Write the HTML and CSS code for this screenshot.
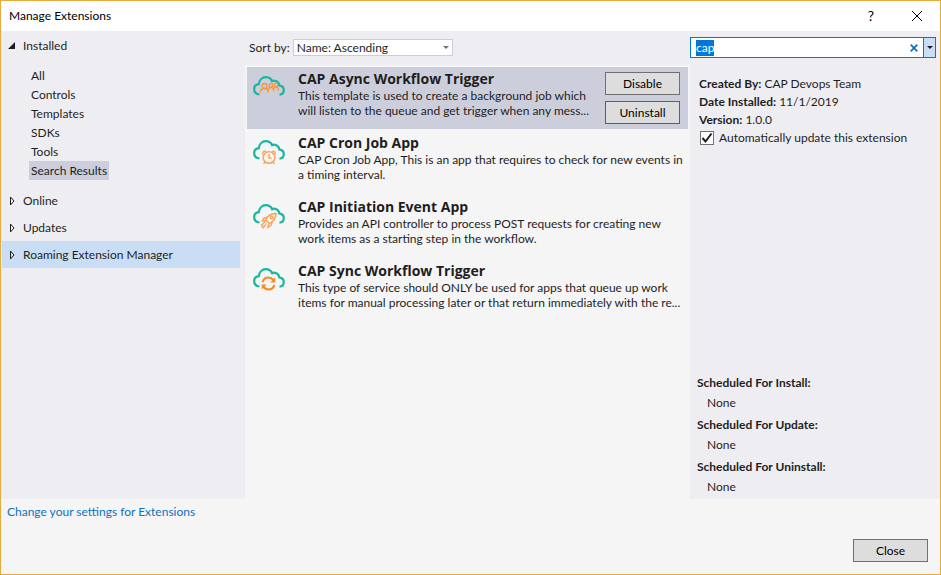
FILE: index.html
```html
<!DOCTYPE html>
<html lang="en">
<head>
<meta charset="utf-8">
<title>Manage Extensions</title>
<link rel="stylesheet" href="styles.css">
</head>
<body>
<svg class="defs" aria-hidden="true">
  <symbol id="cloud" viewBox="0 0 32 24">
    <path d="M6.500 18.500C3 18 1.200 15.800 1.200 13.200C1.200 10.500 3.200 8.500 5.800 8.200C6.200 4.200 9 1.200 12.800 1.200C15.800 1.200 18 2.800 19.200 5.200C20.200 4.700 21.200 4.600 22.200 4.800C24.500 5.300 26 7 26.200 9.400C29 9.800 30.800 11.600 30.800 14C30.800 16.600 29 18.500 26.500 18.600" fill="none" stroke="#1cb5a0" stroke-width="2.200"/>
  </symbol>
</svg>
<div class="window">
  <header class="titlebar">
    <h1>Manage Extensions</h1>
    <button class="caption help" type="button">?</button>
    <button class="caption" type="button" aria-label="Close window"><svg width="12" height="12" viewBox="0 0 12 12"><path d="M1 1L11 11M11 1L1 11" stroke="#000" fill="none"/></svg></button>
  </header>
  <main class="content">
    <nav class="sidebar">
      <button class="group" type="button"><svg width="8" height="8" viewBox="0 0 8 8"><path d="M7 0V7H0Z" fill="#1e1e1e"/></svg>Installed</button>
      <ul class="tree">
        <li><a href="#">All</a></li>
        <li><a href="#">Controls</a></li>
        <li><a href="#">Templates</a></li>
        <li><a href="#">SDKs</a></li>
        <li><a href="#">Tools</a></li>
        <li><a class="current" href="#">Search Results</a></li>
      </ul>
      <button class="group" type="button"><svg width="8" height="10" viewBox="0 0 8 10"><path d="M2.500 1L6 5L2.500 9Z" fill="none" stroke="#1e1e1e"/></svg>Online</button>
      <button class="group" type="button"><svg width="8" height="10" viewBox="0 0 8 10"><path d="M2.500 1L6 5L2.500 9Z" fill="none" stroke="#1e1e1e"/></svg>Updates</button>
      <button class="group active" type="button"><svg width="8" height="10" viewBox="0 0 8 10"><path d="M2.500 1L6 5L2.500 9Z" fill="none" stroke="#1e1e1e"/></svg>Roaming Extension Manager</button>
    </nav>
    <section class="results">
      <div class="sortbar">
        <label for="sort">Sort by:</label>
        <div class="combo">
          <select id="sort"><option>Name: Ascending</option></select>
          <svg width="6" height="3" viewBox="0 0 6 3"><path d="M0 0H6L3 3Z" fill="#717171"/></svg>
        </div>
      </div>
      <ul class="list">
        <li class="item selected">
          <svg class="icon" viewBox="0 0 32 28"><use href="#cloud" width="32" height="24"/>
            <g fill="none" stroke="#f7953c" stroke-width="1.300"><circle cx="11.500" cy="10" r="2.500"/><path d="M7.500 16.500V15.500C7.500 13.500 9 12.500 11.500 12.500S15.200 13.500 15.200 15.500V16.500"/><circle cx="18" cy="9.500" r="1.800"/><path d="M15 14C15.500 12 16.500 11.500 18 11.500S20.800 12.500 20.800 15"/><circle cx="23" cy="9" r="1.800"/><path d="M20.800 13C21 11.500 22 11 23 11C24.500 11 25.500 12 25.500 14.500"/></g></svg>
          <div class="text"><h2>CAP Async Workflow Trigger</h2><p>This template is used to create a background job which<br>will listen to the queue and get trigger when any mess...</p></div>
          <div class="actions"><button class="push" type="button">Disable</button><button class="push focus" type="button">Uninstall</button></div>
        </li>
        <li class="item">
          <svg class="icon" viewBox="0 0 32 28"><use href="#cloud" width="32" height="24"/>
            <g transform="translate(-0.500 -0.500)"><circle cx="16.500" cy="18" r="8" fill="#f5f5f5"/>
            <g fill="none" stroke="#f9a55c" stroke-width="1.500"><circle cx="16.500" cy="18" r="5.800"/><path d="M16.500 14.500V18.500H19M10.500 15C9.500 12.500 11.500 11 13.500 12.200M22.500 15C23.500 12.500 21.500 11 19.500 12.200M12.500 22.500L11 24.500M20.500 22.500L22 24.500"/></g></g></svg>
          <div class="text"><h2>CAP Cron Job App</h2><p>CAP Cron Job App, This is an app that requires to check for new events in<br>a timing interval.</p></div>
        </li>
        <li class="item">
          <svg class="icon" viewBox="0 0 32 28"><use href="#cloud" width="32" height="24"/>
            <g transform="translate(-0.500 -1)"><path d="M9 18L14 11L25 9L23 18L14 26Z" fill="#f5f5f5"/>
            <g fill="none" stroke="#f9a04f" stroke-width="1.300"><path d="M13 17C14.500 13.500 18 10.700 23.500 10.500C23.500 15 21 18.500 17 20.500Z"/><circle cx="19.300" cy="14.500" r="1.300"/><path d="M15 14.500L11.500 15L9.800 18L13 17.500M19.500 19L19 22L15.500 24.500L16.500 20.500M12.500 19L8.500 22.500M14 20.500L10.500 25.500M11 22.500L9 24.500"/></g></g></svg>
          <div class="text"><h2>CAP Initiation Event App</h2><p>Provides an API controller to process POST requests for creating new<br>work items as a starting step in the workflow.</p></div>
        </li>
        <li class="item">
          <svg class="icon" viewBox="0 0 32 28"><use href="#cloud" width="32" height="24"/>
            <g transform="translate(-0.500 -1.500)"><circle cx="16" cy="17" r="8" fill="#f5f5f5"/>
            <g fill="none" stroke="#f68b1f" stroke-width="2.200"><path d="M10.200 15.500C11 12.500 13.500 11 16 11C18 11 19.700 12 21 13.500M21.800 18.500C21 21.500 18.500 23 16 23C14 23 12.300 22 11 20.500"/></g><path d="M22.800 11V16H17.800ZM9.200 23V18H14.200Z" fill="#f68b1f"/></g></svg>
          <div class="text"><h2>CAP Sync Workflow Trigger</h2><p>This type of service should ONLY be used for apps that queue up work<br>items for manual processing later or that return immediately with the re...</p></div>
        </li>
      </ul>
    </section>
    <aside class="details">
      <div class="search">
        <input id="query" type="text" value="cap" aria-label="Search" autofocus>
        <button class="clear" type="button" aria-label="Clear"><svg width="8" height="8" viewBox="0 0 8 8"><path d="M0.700 0.700L7.300 7.300M7.300 0.700L0.700 7.300" stroke="#0e70c0" stroke-width="1.700"/></svg></button>
        <button class="drop" type="button" aria-label="Search options"><svg width="6" height="3" viewBox="0 0 6 3"><path d="M0 0H6L3 3Z" fill="#1e1e1e"/></svg></button>
      </div>
      <div class="meta">
        <p><b>Created By:</b> CAP Devops Team</p>
        <p><b>Date Installed:</b> 11/1/2019</p>
        <p><b>Version:</b> 1.0.0</p>
        <label class="check"><span class="box"><input type="checkbox" checked><svg width="14" height="14" viewBox="0 0 14 14"><path d="M2.500 7L5.500 10.500L11.500 2.500" fill="none" stroke="#1e1e1e" stroke-width="2"/></svg></span>Automatically update this extension</label>
      </div>
      <dl class="schedule">
        <dt>Scheduled For Install:</dt><dd>None</dd>
        <dt>Scheduled For Update:</dt><dd>None</dd>
        <dt>Scheduled For Uninstall:</dt><dd>None</dd>
      </dl>
    </aside>
  </main>
  <footer class="footer">
    <a href="#">Change your settings for Extensions</a>
    <button class="push" type="button">Close</button>
  </footer>
</div>
<script src="script.js"></script>
</body>
</html>
```
FILE: script.js
```js
const query = document.getElementById("query");
query.focus();
query.select();
```
FILE: styles.css
```css
* { box-sizing: border-box; }
body, h1, h2, p, ul, dl, dd { margin: 0; padding: 0; }
ul { list-style: none; }
body {
  font: 12px/16px Lato, "Open Sans", sans-serif;
  color: #1e1e1e;
}
button, input, select { font: inherit; color: inherit; }
button { padding: 0; }
a { color: inherit; text-decoration: none; }
svg { display: block; flex: none; }
.defs { position: absolute; width: 0; height: 0; }
.window {
  display: flex;
  flex-direction: column;
  min-height: 100vh;
  border: 1px solid #e8ab3d;
  background: #f5f5f5;
}

.titlebar {
  display: flex;
  align-items: center;
  height: 30px;
  padding-left: 8px;
  background: #fff;
  color: #000;
}
.titlebar h1 { flex: 1; font-size: 12px; font-weight: 400; }
.caption {
  display: flex;
  align-items: center;
  justify-content: center;
  width: 46px;
  height: 30px;
  border: 0;
  background: none;
}
.help { font-size: 14px; }

.content {
  flex: 1;
  display: grid;
  grid-template-columns: 244px minmax(0, 1fr) 250px;
}
.sidebar, .details, .sortbar { background: #eeeef2; }
.sidebar { padding: 1px 5px 0 1px; }
.group {
  display: flex;
  align-items: center;
  gap: 7px;
  width: 100%;
  height: 27px;
  padding-left: 6px;
  border: 0;
  background: none;
}
.group.active { background: #c9def5; }
.tree { padding: 7px 0 7px 27px; }
.tree a { display: block; width: max-content; line-height: 19px; padding: 0 2px; }
.tree .current { background: #cccedb; }

.sortbar {
  display: flex;
  align-items: center;
  gap: 3px;
  height: 34px;
  padding: 0 0 1px 4px;
}
.combo { position: relative; width: 160px; }
.combo select {
  display: block;
  appearance: none;
  width: 100%;
  height: 17px;
  padding: 0 3px;
  border: 1px solid #cccedb;
  border-radius: 0;
  background: #fff;
  line-height: 15px;
}
.combo svg { position: absolute; right: 4px; top: 7px; pointer-events: none; }

.list {
  display: flex;
  flex-direction: column;
  gap: 2px;
  padding: 2px;
}
.item {
  display: flex;
  gap: 13px;
  height: 62px;
  padding: 3px 2px 0 6px;
}
.item.selected { background: #cccedb; }
.icon { width: 32px; height: 28px; margin-top: 6px; }
.text { flex: 1; min-width: 0; white-space: nowrap; }
.text h2 { margin-bottom: 1px; font: 700 14px/17px "Open Sans", sans-serif; }
.text p { line-height: 15px; }
.actions {
  display: flex;
  flex-direction: column;
  gap: 6px;
  padding: 2px 6px 0 0;
}
.push {
  width: 75px;
  height: 23px;
  border: 1px solid #707070;
  background: #ddd;
  color: #000;
}
.push.focus { border-color: #0078d7; }

.details {
  display: flex;
  flex-direction: column;
}
.search {
  display: flex;
  height: 21px;
  margin: 6px 4px 0 0;
  border: 1px solid #007acc;
  background: #fff;
}
.search input {
  flex: 1;
  min-width: 0;
  padding: 0 5px;
  border: 0;
  outline: 0;
  background: none;
}
.search input::selection { background: #0078d7; color: #fff; }
.clear, .drop {
  display: flex;
  align-items: center;
  justify-content: center;
  border: 0;
  background: none;
}
.clear { width: 18px; }
.drop { width: 12px; border-left: 1px solid #007acc; background: #c9def5; }
.meta { padding: 17px 9px 0; line-height: 18px; }
.check { display: flex; align-items: center; gap: 5px; }
.box { position: relative; width: 14px; height: 14px; margin-left: 1px; }
.box input {
  appearance: none;
  display: block;
  width: 14px;
  height: 14px;
  margin: 0;
  border: 1px solid #717171;
  background: #fefefe;
}
.box svg { position: absolute; left: 0; top: 0; pointer-events: none; }
.box input:not(:checked) + svg { display: none; }
.schedule { margin-top: auto; padding: 0 7px; }
.schedule dt { line-height: 20px; font-weight: 700; }
.schedule dd { padding: 0 0 2px 10px; line-height: 20px; }

.footer {
  display: flex;
  align-items: flex-end;
  justify-content: space-between;
  height: 75px;
  padding: 5px 12px 12px 6px;
}
.footer a { align-self: flex-start; color: #0e70c0; }
```
